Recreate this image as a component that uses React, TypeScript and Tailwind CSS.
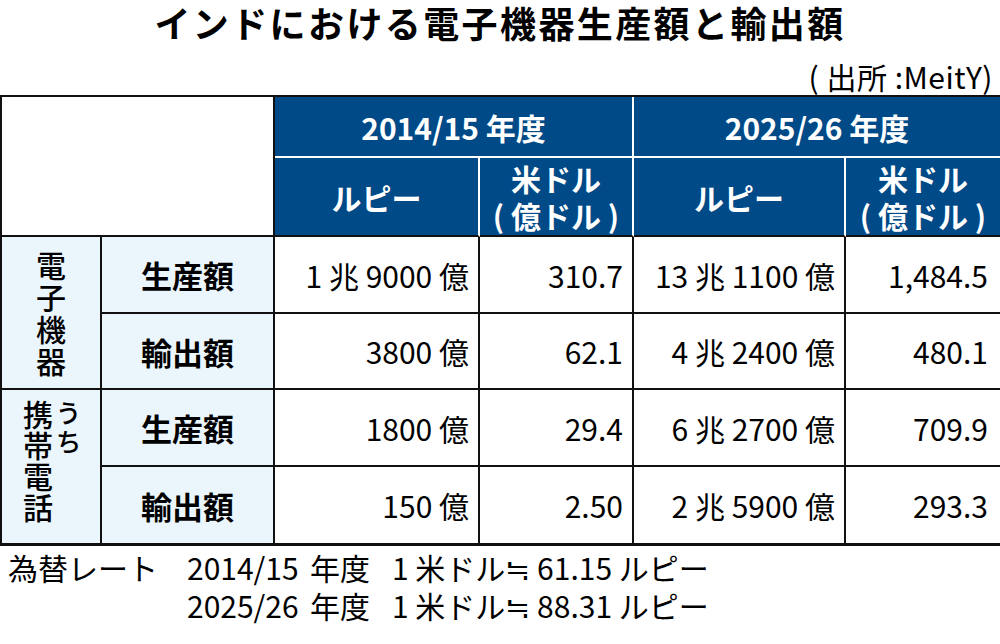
import React from "react";

const F = { fontFamily: '"Noto Sans CJK JP", "Noto Sans", sans-serif' };

const blue = "bg-[#004a88]";
const bodyRow = [
  { label: "生産額", a: "1 兆 9000 億", b: "310.7", c: "13 兆 1100 億", d: "1,484.5" },
  { label: "輸出額", a: "3800 億", b: "62.1", c: "4 兆 2400 億", d: "480.1" },
  { label: "生産額", a: "1800 億", b: "29.4", c: "6 兆 2700 億", d: "709.9" },
  { label: "輸出額", a: "150 億", b: "2.50", c: "2 兆 5900 億", d: "293.3" },
];

export default function App() {
  return (
    <div className="w-[1000px] h-[644px] bg-white text-black overflow-hidden" style={F}>
      <div className="h-[42px] pt-[1px] flex items-center justify-center text-[36px] font-bold leading-[42px] tracking-[2.4px]">
        インドにおける電子機器生産額と輸出額
      </div>
      <div className="h-[53px] flex items-end justify-end pr-[7px] pb-[4px] text-[30px] leading-none tracking-[0.5px]">
        ( 出所 :MeitY)
      </div>
      <div className="grid grid-cols-[100px_173px_205px_154px_212px_154px] grid-rows-[61px_79px_77px_76px_77px_76px] border-t-2 border-l-2 border-b-[3px] border-[#111]">
        <div className="col-span-2 row-span-2 bg-white border-r-2 border-b-2 border-[#111]" />
        <div className={`col-span-2 ${blue} border-r-2 border-b-2 border-white flex items-center justify-center text-white text-[30px] font-bold leading-none`}>
          2014/15 年度
        </div>
        <div className={`col-span-2 ${blue} border-b-2 border-white flex items-center justify-center text-white text-[30px] font-bold leading-none`}>
          2025/26 年度
        </div>
        <div className={`${blue} border-r-2 border-white border-b-2 border-b-[#111] flex items-center justify-center text-white text-[30px] font-bold leading-none`}>
          ルピー
        </div>
        <div className={`${blue} border-r-2 border-white border-b-2 border-b-[#111] flex items-center justify-center text-white text-[30px] font-bold leading-[37px] text-center whitespace-pre-line`}>
          {"米ドル\n( 億ドル )"}
        </div>
        <div className={`${blue} border-r-2 border-white border-b-2 border-b-[#111] flex items-center justify-center text-white text-[30px] font-bold leading-none`}>
          ルピー
        </div>
        <div className={`${blue} border-b-2 border-b-[#111] flex items-center justify-center text-white text-[30px] font-bold leading-[37px] text-center whitespace-pre-line`}>
          {"米ドル\n( 億ドル )"}
        </div>

        {/* group 1 */}
        <div className="row-span-2 bg-[#eaf5fc] border-r-2 border-b-2 border-[#111] flex flex-col items-center pt-[14px]">
          <div className="[writing-mode:vertical-rl] text-[30px] font-medium leading-[30px] tracking-[2px]">電子機器</div>
        </div>
        {bodyRow.slice(0, 2).map((r, i) => (
          <Row key={"a" + i} r={r} last={false} />
        ))}
        {/* group 2 */}
        <div className="row-span-2 bg-[#eaf5fc] border-r-2 border-[#111] flex flex-row justify-center items-start gap-[2px] pt-[10px] pl-[2px]">
          <div className="[writing-mode:vertical-rl] text-[30px] font-medium leading-[30px] tracking-[1px]">携帯電話</div>
          <div className="[writing-mode:vertical-rl] text-[26px] font-medium leading-[26px] tracking-[3px]">うち</div>
        </div>
        {bodyRow.slice(2, 4).map((r, i) => (
          <Row key={"b" + i} r={r} last={i === 1} />
        ))}
      </div>
      <div className="pt-[2px] text-[30px] leading-[38px]">
        <div className="grid grid-cols-[179px_123px_82px_auto] pl-[8px] whitespace-pre-line">
          <span>為替レート</span>
          <span>{"2014/15\n2025/26"}</span>
          <span>{"年度\n年度"}</span>
          <span>{"1 米ドル≒ 61.15 ルピー\n1 米ドル≒ 88.31 ルピー"}</span>
        </div>
      </div>
    </div>
  );
}

function Row({ r, last }: { r: { label: string; a: string; b: string; c: string; d: string }; last: boolean }) {
  const bb = last ? "" : "border-b-2";
  return (
    <>
      <div className={`bg-[#eaf5fc] border-r-2 ${bb} border-[#111] flex items-center justify-center text-[31px] font-bold leading-none`}>
        {r.label}
      </div>
      <div className={`bg-white border-r-2 ${bb} border-[#111] flex items-center justify-end pr-[9px] text-[30px] leading-none`}>
        {r.a}
      </div>
      <div className={`bg-white border-r-2 ${bb} border-[#111] flex items-center justify-end pr-[9px] text-[30px] leading-none`}>
        {r.b}
      </div>
      <div className={`bg-white border-r-2 ${bb} border-[#111] flex items-center justify-end pr-[9px] text-[30px] leading-none`}>
        {r.c}
      </div>
      <div className={`bg-white ${bb} border-[#111] flex items-center justify-end pr-[12px] text-[30px] leading-none`}>
        {r.d}
      </div>
    </>
  );
}
